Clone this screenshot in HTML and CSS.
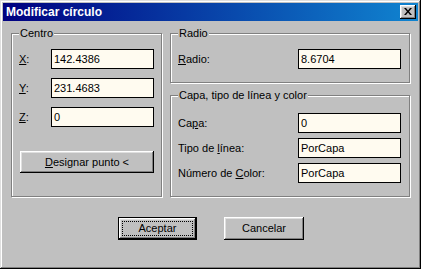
FILE: index.html
```html
<!DOCTYPE html>
<html lang="es">
<head>
<meta charset="utf-8">
<title>Modificar círculo</title>
<link rel="stylesheet" href="styles.css">
</head>
<body>
<div class="window">
  <div class="titlebar">
    <span class="title">Modificar círculo</span>
    <div class="close">
      <svg width="8" height="7" viewBox="0 0 8 7"><path d="M0 0h2l2 2.5L6 0h2L5 3.5 8 7H6L4 4.5 2 7H0l3-3.5z" fill="#000"/></svg>
    </div>
  </div>
  <div class="main">
    <div class="panels">
      <div class="group centro">
        <div class="legend">Centro</div>
        <div class="row"><span class="lbl short"><u>X</u>:</span><div class="field">142.4386</div></div>
        <div class="row"><span class="lbl short"><u>Y</u>:</span><div class="field">231.4683</div></div>
        <div class="row"><span class="lbl short"><u>Z</u>:</span><div class="field">0</div></div>
        <div class="btn designar"><u>D</u>esignar punto &lt;</div>
      </div>
      <div class="rightcol">
        <div class="group radio">
          <div class="legend">Radio</div>
          <div class="row"><span class="lbl long"><u>R</u>adio:</span><div class="field">8.6704</div></div>
        </div>
        <div class="group capa">
          <div class="legend">Capa, tipo de línea y color</div>
          <div class="row first"><span class="lbl long">Ca<u>p</u>a:</span><div class="field">0</div></div>
          <div class="row tight"><span class="lbl long">Tipo de <u>l</u>ínea:</span><div class="field">PorCapa</div></div>
          <div class="row tight"><span class="lbl long">Número de <u>C</u>olor:</span><div class="field">PorCapa</div></div>
        </div>
      </div>
    </div>
    <div class="actions">
      <div class="btn default"><span class="focus">Aceptar</span></div>
      <div class="btn cancel">Cancelar</div>
    </div>
  </div>
</div>
</body>
</html>
```
FILE: styles.css
```css
* { box-sizing: border-box; }
html, body { margin: 0; padding: 0; background: #c0c0c0; }
body { font-family: "Liberation Sans", Arial, sans-serif; font-size: 11px; color: #000; }

.window {
  width: 421px;
  height: 269px;
  padding: 3px;
  background: #c0c0c0;
  box-shadow: inset -1px -1px #000, inset 1px 1px #dfdfdf, inset -2px -2px #808080, inset 2px 2px #fff;
  display: flex;
  flex-direction: column;
}

.titlebar {
  height: 18px;
  background: linear-gradient(90deg, #000080, #1084d0);
  display: flex;
  align-items: center;
  justify-content: space-between;
  padding: 0 2px 0 3px;
}
.title {
  color: #fff;
  font-weight: bold;
  font-size: 12px;
  line-height: 18px;
}
.close {
  width: 16px;
  height: 14px;
  background: #c0c0c0;
  box-shadow: inset -1px -1px #000, inset 1px 1px #fff, inset -2px -2px #808080, inset 2px 2px #dfdfdf;
  display: flex;
  align-items: center;
  justify-content: center;
  padding-bottom: 1px;
}
.close svg { display: block; }

.main { padding: 12px 7px 0 8px; }

.panels { display: flex; gap: 8px; align-items: flex-start; }

.group {
  border: 1px solid #808080;
  box-shadow: inset 1px 1px #fff, 1px 1px #fff;
  padding: 0 7px;
}
.legend {
  display: table;
  margin: -7px 0 0 0;
  padding: 0 1px;
  line-height: 13px;
  height: 13px;
  background: #c0c0c0;
}

.centro { width: 151px; height: 164px; }
.rightcol { width: 240px; display: flex; flex-direction: column; gap: 12px; }
.radio { height: 50px; }
.capa { height: 102px; }

.row { display: flex; align-items: center; margin-top: 9px; }
.row.first { margin-top: 11px; }
.row.tight { margin-top: 5px; }

.lbl { display: block; line-height: 13px; }
.lbl.short { width: 32px; }
.lbl.long { width: 120px; }

.field {
  width: 103px;
  height: 20px;
  border: 1px solid #000;
  background: #fffbf0;
  padding-left: 2px;
  line-height: 18px;
}

.btn {
  height: 23px;
  background: #c0c0c0;
  box-shadow: inset -1px -1px #000, inset 1px 1px #fff, inset -2px -2px #808080, inset 2px 2px #dfdfdf;
  display: flex;
  align-items: center;
  justify-content: center;
  line-height: 13px;
}
.designar { width: 134px; height: 22px; margin: 24px 0 0 1px; }

.actions { display: flex; justify-content: center; gap: 27px; margin-top: 20px; }
.default { width: 79px; border: 1px solid #000; }
.cancel { width: 80px; }
.focus {
  flex: 1;
  align-self: stretch;
  margin: 3px;
  border: 1px dotted #000;
  display: flex;
  align-items: center;
  justify-content: center;
}
```
